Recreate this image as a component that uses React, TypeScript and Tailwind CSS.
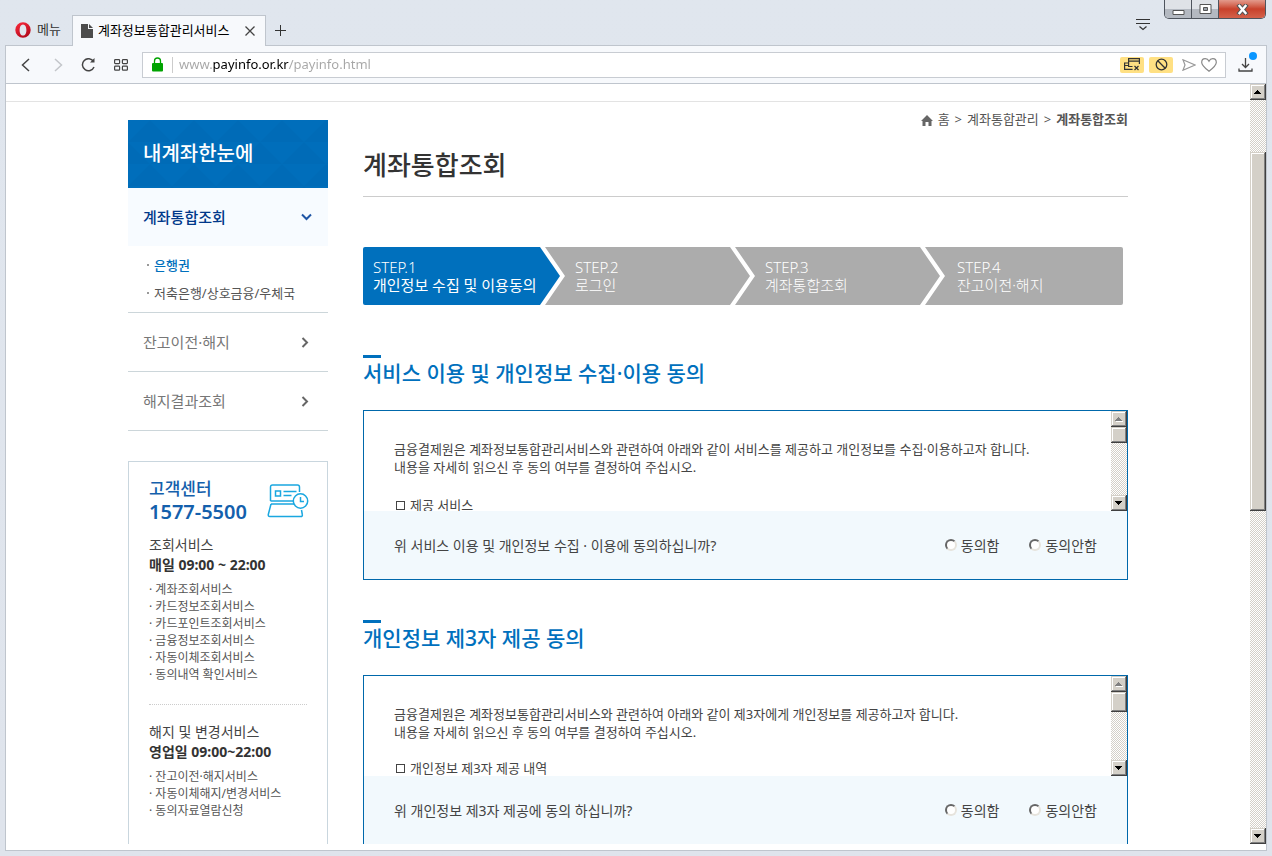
/**
 * Account integration inquiry page
 * Consent step, shown inside the browser window frame
 */

import React, { useState } from 'react';

const bevel =
  'bg-[#d4d0c8] shadow-[inset_-1px_-1px_#404040,inset_1px_1px_#d4d0c8,inset_-2px_-2px_#808080,inset_2px_2px_#fff]';

const steps = [
  { no: 'STEP.1', label: '개인정보 수집 및 이용동의' },
  { no: 'STEP.2', label: '로그인' },
  { no: 'STEP.3', label: '계좌통합조회' },
  { no: 'STEP.4', label: '잔고이전·해지' },
];

const inquiryServices = [
  '계좌조회서비스',
  '카드정보조회서비스',
  '카드포인트조회서비스',
  '금융정보조회서비스',
  '자동이체조회서비스',
  '동의내역 확인서비스',
];

const changeServices = ['잔고이전·해지서비스', '자동이체해지/변경서비스', '동의자료열람신청'];

const ArrowButton = ({ dir, disabled }: { dir: 'up' | 'down'; disabled?: boolean }) => (
  <button
    type="button"
    aria-label={dir === 'up' ? '위로' : '아래로'}
    disabled={disabled}
    className={`flex size-4 shrink-0 items-center justify-center ${bevel}`}
  >
    <svg width="8" height="6" viewBox="0 0 8 6" shapeRendering="crispEdges">
      {disabled && <path d="M1 5h7v1H1z" fill="#fff" />}
      <path d={dir === 'up' ? 'M0 5h7L3.5 1z' : 'M0 1h7L3.5 5z'} fill={disabled ? '#808080' : '#000'} />
    </svg>
  </button>
);

const ScrollBar = ({ thumb, spacer, disabled }: { thumb: string; spacer?: string; disabled?: boolean }) => (
  <div className="flex w-4 shrink-0 flex-col bg-[repeating-conic-gradient(#d4d0c8_0_25%,#fff_0_50%)] bg-[length:2px_2px]">
    <ArrowButton dir="up" disabled={disabled} />
    <div className="flex-1">
      <div className={spacer} />
      <div className={`${thumb} ${bevel}`} />
    </div>
    <ArrowButton dir="down" />
  </div>
);

const TitleBar = () => (
  <div className="flex h-[45px] items-end pl-[6px]">
    <button type="button" className="flex h-[30px] items-center gap-1.5 self-end pl-[9px] pr-[11px] text-[13px] text-[#333]">
      <svg width="16" height="16" viewBox="0 0 16 16">
        <defs>
          <linearGradient id="opera" x1="0" y1="0" x2="0.6" y2="1">
            <stop offset="0" stopColor="#ff2b3d" />
            <stop offset="1" stopColor="#b3091c" />
          </linearGradient>
        </defs>
        <path
          fillRule="evenodd"
          fill="url(#opera)"
          d="M8 .3a7.700 7.700 0 1 0 0 15.400A7.700 7.700 0 0 0 8 .3zM8 2.400c2.200 0 3.400 2.400 3.400 5.600S10.200 13.600 8 13.600 4.600 11.200 4.600 8 5.800 2.400 8 2.400z"
        />
      </svg>
      메뉴
    </button>
    <div className="z-10 -mb-px flex h-[31px] w-[194px] items-center border border-b-0 border-[#bfc5cd] bg-[#f7f9fc] pl-2 pr-2.5">
      <svg width="12" height="14" viewBox="0 0 12 14" fill="#4c4c4c">
        <path d="M0 0h7v5h5v9H0z" />
        <path d="M8 0l4 4H8z" />
      </svg>
      <span className="ml-[5px] flex-1 whitespace-nowrap text-[13px] text-black">계좌정보통합관리서비스</span>
      <button type="button" aria-label="탭 닫기">
        <svg width="10" height="10" viewBox="0 0 10 10" stroke="#444" strokeWidth="1.3">
          <path d="M.5.5l9 9M9.500.500l-9 9" />
        </svg>
      </button>
    </div>
    <button type="button" aria-label="새 탭" className="mb-[9px] ml-[9px]">
      <svg width="11" height="11" viewBox="0 0 11 11" stroke="#333" shapeRendering="crispEdges">
        <path d="M5.500 0v11M0 5.500h11" />
      </svg>
    </button>
    <button type="button" aria-label="탭 메뉴" className="mb-[13px] ml-auto">
      <svg width="14" height="14" viewBox="0 0 14 14" stroke="#333" strokeWidth="1.200" fill="none">
        <path d="M0 1.500h14M0 5.500h14M3.500 8.500L7 11.500l3.500-3" />
      </svg>
    </button>
    <div className="ml-[14px] mr-[6px] flex h-[19px] self-start overflow-hidden rounded-b-[5px] border border-t-0 border-[#4e545d]">
      <button
        type="button"
        aria-label="최소화"
        className="flex w-[27px] items-center justify-center border-r border-[#4e545d] bg-linear-to-b from-[#dfe2e7] from-50% to-[#b4b9c1] to-50%"
      >
        <svg width="13" height="13" viewBox="0 0 13 13">
          <path d="M1 7.500h11v4H1z" fill="#fff" stroke="#555" />
        </svg>
      </button>
      <button
        type="button"
        aria-label="최대화"
        className="flex w-[27px] items-center justify-center border-r border-[#4e545d] bg-linear-to-b from-[#dfe2e7] from-50% to-[#b4b9c1] to-50%"
      >
        <svg width="13" height="11" viewBox="0 0 13 11" fill="#fff" stroke="#555">
          <path d="M1 .5h11v9H1z" />
          <path d="M4.500 3.500h4v3h-4z" fill="#9aa0a8" />
        </svg>
      </button>
      <button
        type="button"
        aria-label="닫기"
        className="flex w-[46px] items-center justify-center bg-linear-to-b from-[#e29a8c] via-[#c8412b] via-50% to-[#d4614a]"
      >
        <svg width="13" height="11" viewBox="0 0 13 11" strokeLinecap="square">
          <path d="M3.500 2l6 7M9.500 2l-6 7" stroke="#555" strokeWidth="4.400" />
          <path d="M3.500 2l6 7M9.500 2l-6 7" stroke="#fff" strokeWidth="2.400" />
        </svg>
      </button>
    </div>
  </div>
);

const ToolBar = () => (
  <div className="flex h-[39px] shrink-0 items-center border-y border-[#bfc5cd] bg-[#f7f9fc]">
    <div className="flex items-center gap-[18px] pl-[15px] pr-[14px] text-[#444]">
      <button type="button" aria-label="뒤로">
        <svg width="10" height="14" viewBox="0 0 10 14" fill="none" stroke="currentColor" strokeWidth="1.500">
          <path d="M8 1L1.500 7 8 13" />
        </svg>
      </button>
      <button type="button" aria-label="앞으로" className="pl-1 text-[#c3c6ca]">
        <svg width="10" height="14" viewBox="0 0 10 14" fill="none" stroke="currentColor" strokeWidth="1.500">
          <path d="M2 1l6.500 6L2 13" />
        </svg>
      </button>
      <button type="button" aria-label="새로고침">
        <svg width="15" height="14" viewBox="0 0 15 14" fill="none" stroke="currentColor" strokeWidth="1.500">
          <path d="M12.500 3.500A6 6 0 1 0 13 9" />
          <path d="M9 4.600h4.500V0z" fill="currentColor" stroke="none" />
        </svg>
      </button>
      <button type="button" aria-label="스피드 다이얼">
        <svg width="14" height="12" viewBox="0 0 14 12" fill="none" stroke="currentColor" strokeWidth="1.200">
          <rect x=".6" y=".6" width="5" height="4" rx=".8" />
          <rect x="8.400" y=".6" width="5" height="4" rx=".8" />
          <rect x=".6" y="7.200" width="5" height="4" rx=".8" />
          <rect x="8.400" y="7.200" width="5" height="4" rx=".8" />
        </svg>
      </button>
    </div>
    <div className="flex h-[26px] flex-1 items-center border border-[#c8ccd2] bg-white pl-[9px] pr-2">
      <svg width="11" height="15" viewBox="0 0 11 15">
        <path d="M2.500 7V4a3 3 0 0 1 6 0v3" fill="none" stroke="#00a300" strokeWidth="1.300" />
        <rect y="6" width="11" height="8.500" rx="1" fill="#00a300" />
      </svg>
      <div className="ml-[9px] h-4 w-px bg-[#ccc]" />
      <input
        type="text"
        aria-label="주소"
        defaultValue="www.payinfo.or.kr/payinfo.html"
        className="ml-[6px] min-w-0 flex-1 bg-linear-[90deg,#a6a6a6_33px,#000_33px,#000_110px,#a6a6a6_110px] bg-clip-text text-[13px] text-transparent outline-none"
      />
      <div className="flex items-center gap-[5px]">
        <button type="button" aria-label="팝업 차단" className="flex h-4 w-6 items-center justify-center rounded-[2px] bg-[#ffe083]">
          <svg width="16" height="13" viewBox="0 0 16 13" fill="none" stroke="#333" strokeWidth="1.200">
            <path d="M8.500 8.500H4.600V.6h10.800v5.500M4.600 3.200h10.800M4.600 5H.6v6.400h8M.6 7.500h4" />
            <path d="M10.500 8l4 4M14.500 8l-4 4" />
          </svg>
        </button>
        <button type="button" aria-label="광고 차단" className="flex h-4 w-6 items-center justify-center rounded-[2px] bg-[#ffe083]">
          <svg width="13" height="13" viewBox="0 0 13 13" fill="none" stroke="#333" strokeWidth="1.300">
            <circle cx="6.500" cy="6.500" r="5.300" />
            <path d="M2.800 2.800l7.400 7.400" />
          </svg>
        </button>
        <button type="button" aria-label="보내기" className="ml-1">
          <svg width="14" height="12" viewBox="0 0 14 12" fill="none" stroke="#999" strokeWidth="1.200">
            <path d="M1 .8L13 6 1 11.200 3 6z" />
          </svg>
        </button>
        <button type="button" aria-label="북마크">
          <svg width="16" height="14" viewBox="0 0 16 14" fill="none" stroke="#888" strokeWidth="1.200">
            <path d="M8 13.200C4 10 .7 7.500.7 4.400.7 2.200 2.300.7 4.200.7 5.900.7 7.300 1.700 8 3.200 8.700 1.700 10.100.7 11.800.7c1.900 0 3.500 1.500 3.500 3.700 0 3.100-3.200 5.600-7.300 8.800z" />
          </svg>
        </button>
      </div>
    </div>
    <button type="button" aria-label="다운로드" className="relative ml-3 mr-[13px]">
      <svg width="15" height="14" viewBox="0 0 15 14" fill="none" stroke="#444" strokeWidth="1.300">
        <path d="M7.500 0v9M4 6l3.500 3.500L11 6M1 10.500V13h13v-2.500" />
      </svg>
      <span className="absolute -right-1 -top-1.5 size-2 rounded-full bg-[#0a96ff]" />
    </button>
  </div>
);

const ServiceList = ({ items }: { items: string[] }) => (
  <ul className="mt-1.5 text-[12px] leading-[17px] text-[#555]">
    {items.map((item) => (
      <li key={item}>· {item}</li>
    ))}
  </ul>
);

const SideBar = () => (
  <aside className="w-[200px] shrink-0">
    <h2 className="relative flex h-[68px] items-center overflow-hidden bg-[#006ebb] px-[15px] text-[20px] font-medium text-white">
      <svg className="absolute inset-0 size-full">
        <defs>
          <pattern id="tri" width="44" height="44" patternUnits="userSpaceOnUse">
            <path d="M0 22L22 0l22 22zM-22 44L0 22l22 22zM22 44L44 22l22 22z" fill="#006bb7" />
          </pattern>
        </defs>
        <rect width="100%" height="100%" fill="url(#tri)" />
      </svg>
      <span className="relative">내계좌한눈에</span>
    </h2>
    <nav className="text-[15px] text-[#777]">
      <a href="#inquiry" className="flex h-[58px] items-center justify-between bg-[#f7fbff] px-[15px] font-medium text-[#00388a]">
        계좌통합조회
        <svg width="12" height="8" viewBox="0 0 12 8" fill="none" stroke="#1f55a5" strokeWidth="2">
          <path d="M1 1.500L5.500 6 10 1.500" />
        </svg>
      </a>
      <ul className="border-b border-[#ccd6da] py-[5px] pl-[19px] text-[13px] leading-[28px] text-[#555]">
        <li className="flex items-center gap-[5px]">
          <span className="size-[2px] bg-[#999]" />
          <a href="#bank" className="font-medium text-[#0070bd]">은행권</a>
        </li>
        <li className="flex items-center gap-[5px]">
          <span className="size-[2px] bg-[#999]" />
          <a href="#savings">저축은행/상호금융/우체국</a>
        </li>
      </ul>
      {['잔고이전·해지', '해지결과조회'].map((item) => (
        <a key={item} href="#menu" className="flex h-[59px] items-center justify-between border-b border-[#ccd6da] px-[15px]">
          {item}
          <svg className="mr-1" width="8" height="11" viewBox="0 0 8 11" fill="none" stroke="#666" strokeWidth="2">
            <path d="M1.500 1L6 5.500 1.500 10" />
          </svg>
        </a>
      ))}
    </nav>
    <div className="mt-[30px] border border-[#c9d6de] px-5 pb-10 pt-4 text-[14px] leading-[20px] text-[#444]">
      <div className="flex items-center justify-between text-[#1460ac]">
        <div>
          <p className="text-[17px] font-medium leading-[22px]">고객센터</p>
          <p className="text-[20px] font-semibold leading-6">1577-5500</p>
        </div>
        <svg className="-mr-0.5" width="42" height="34" viewBox="0 0 42 34" fill="none" stroke="#1aa7e0" strokeWidth="1.500">
          <path d="M3.500 17V3.200C3.500 1.800 4.200 1 5.500 1h25c1.300 0 2 .8 2 2.200V8M3.500 17h23M4 20L1.300 30.500c-.2 1.300.4 2 1.500 2h31c1.200 0 1.800-.8 1.500-2L34.500 26M4 20h23" />
          <path d="M8.500 7h5v5h-5zM16.500 7.500h13M16.500 11.500h8" />
          <circle cx="33.500" cy="17" r="7.200" />
          <path d="M33.500 13v4.500h3.500" />
        </svg>
      </div>
      <p className="mt-[11px]">조회서비스</p>
      <p className="font-bold text-[#333]">매일 09:00 ~ 22:00</p>
      <ServiceList items={inquiryServices} />
      <div className="mt-[21px] border-t border-dotted border-[#ccc] pt-[17px]">
        <p>해지 및 변경서비스</p>
        <p className="font-bold text-[#333]">영업일 09:00~22:00</p>
        <ServiceList items={changeServices} />
      </div>
    </div>
  </aside>
);

const StepBar = () => (
  <ol className="mr-[5px] mt-[50px] flex h-[58px] overflow-hidden rounded-[2px] text-[15px] leading-[18px] text-white">
    {steps.map((step, i) => {
      let shape =
        '-ml-[15px] flex-1 pl-[30px] font-light bg-[#acacac] [clip-path:polygon(0_0,calc(100%-20px)_0,100%_50%,calc(100%-20px)_100%,0_100%,20px_50%)]';
      if (i === 0) {
        shape =
          'w-[197px] pl-2.5 bg-[#0070bd] [clip-path:polygon(0_0,calc(100%-20px)_0,100%_50%,calc(100%-20px)_100%,0_100%)]';
      }
      if (i === steps.length - 1) {
        shape = '-ml-[15px] w-[198px] pl-8 font-light bg-[#acacac] [clip-path:polygon(0_0,100%_0,100%_100%,0_100%,20px_50%)]';
      }
      return (
        <li key={step.no} className={`flex flex-col justify-center whitespace-nowrap ${shape}`}>
          <span className="font-light">{step.no}</span>
          <span>{step.label}</span>
        </li>
      );
    })}
  </ol>
);

type ConsentProps = {
  name: string;
  title: string;
  lines: string[];
  item: string;
  itemGap: string;
  question: string;
  thumb: string;
  className: string;
};

const ConsentSection = ({ name, title, lines, item, itemGap, question, thumb, className }: ConsentProps) => {
  const [answer, setAnswer] = useState('');

  return (
    <section className={className}>
      <div className="h-[3px] w-[18px] bg-[#0070bd]" />
      <h3 className="text-[21px] font-medium leading-[30px] text-[#0070bd]">{title}</h3>
      <div className="mt-[22px] border border-[#0068ab]">
        <div className="flex h-[100px]">
          <div className="flex-1 overflow-hidden pl-[30px] pt-[29px] text-[13px] leading-[18px] text-[#444]">
            {lines.map((line) => (
              <p key={line}>{line}</p>
            ))}
            <p className={`flex items-center gap-[5px] ${itemGap}`}>
              <span className="ml-0.5 size-[9px] border border-[#444]" />
              {item}
            </p>
          </div>
          <ScrollBar thumb={thumb} disabled />
        </div>
        <fieldset className="flex h-[68px] items-center justify-between bg-[#f2f9fd] px-[30px] text-[14px] text-[#444]">
          <span>{question}</span>
          <div className="flex gap-[30px]">
            {['동의함', '동의안함'].map((label) => (
              <label key={label} className="flex items-center gap-1">
                <input
                  type="radio"
                  name={name}
                  value={label}
                  checked={answer === label}
                  onChange={() => setAnswer(label)}
                  className="size-3 appearance-none rounded-full border-2 border-b-[#e6e3dc] border-l-[#666] border-r-[#e6e3dc] border-t-[#666] bg-white checked:bg-black"
                />
                {label}
              </label>
            ))}
          </div>
        </fieldset>
      </div>
    </section>
  );
};

const App: React.FC = () => {
  return (
    <div className="flex h-screen flex-col overflow-hidden bg-linear-to-b from-[#e0e6ee] to-[#dfe4ec] font-['Noto_Sans','Noto_Sans_CJK_KR',sans-serif]">
      <TitleBar />
      <div className="mx-[5px] mb-[5px] flex min-h-0 flex-1 flex-col border-x border-b border-[#bfc5cd] bg-white pb-1.5">
        <ToolBar />
        <div className="flex min-h-0 flex-1">
          <div className="min-w-0 flex-1 overflow-hidden">
            <div className="h-[18px] border-b border-[#e3e3e3]" />
            <div className="mx-auto flex max-w-[1000px] gap-[35px] pt-[18px]">
              <SideBar />
              <main className="min-w-0 flex-1">
                <nav className="-mt-2.5 flex h-5 items-center justify-end gap-[5px] text-[13px] text-[#555]">
                  <svg width="12" height="11" viewBox="0 0 12 11" fill="#666">
                    <path d="M6 0L0 6h1.500v5h3V7h3v4h3V6H12z" />
                  </svg>
                  <a href="#home">홈</a>
                  <span>&gt;</span>
                  <a href="#manage">계좌통합관리</a>
                  <span>&gt;</span>
                  <strong>계좌통합조회</strong>
                </nav>
                <h1 className="mt-4 border-b border-[#ccc] pb-3 text-[26px] font-medium leading-[38px] text-[#333]">
                  계좌통합조회
                </h1>
                <StepBar />
                <ConsentSection
                  className="mt-[50px]"
                  name="collect"
                  title="서비스 이용 및 개인정보 수집·이용 동의"
                  lines={[
                    '금융결제원은 계좌정보통합관리서비스와 관련하여 아래와 같이 서비스를 제공하고 개인정보를 수집·이용하고자 합니다.',
                    '내용을 자세히 읽으신 후 동의 여부를 결정하여 주십시오.',
                  ]}
                  item="제공 서비스"
                  itemGap="mt-5"
                  question="위 서비스 이용 및 개인정보 수집 · 이용에 동의하십니까?"
                  thumb="h-4"
                />
                <ConsentSection
                  className="mt-10"
                  name="provide"
                  title="개인정보 제3자 제공 동의"
                  lines={[
                    '금융결제원은 계좌정보통합관리서비스와 관련하여 아래와 같이 제3자에게 개인정보를 제공하고자 합니다.',
                    '내용을 자세히 읽으신 후 동의 여부를 결정하여 주십시오.',
                  ]}
                  item="개인정보 제3자 제공 내역"
                  itemGap="mt-[18px]"
                  question="위 개인정보 제3자 제공에 동의 하십니까?"
                  thumb="h-5"
                />
              </main>
            </div>
          </div>
          <ScrollBar spacer="h-[52px]" thumb="h-[359px]" />
        </div>
      </div>
    </div>
  );
};

export default App;
